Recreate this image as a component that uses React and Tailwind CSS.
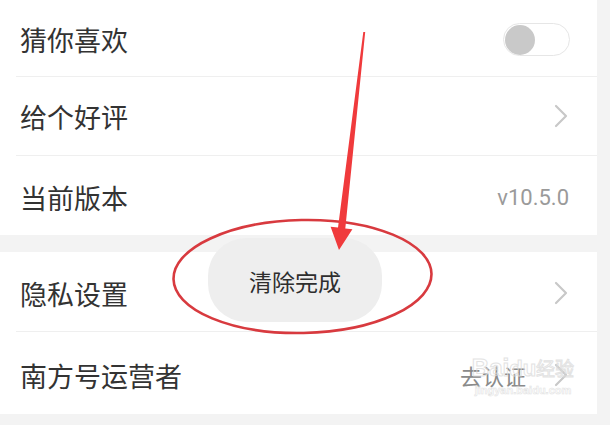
import React from "react";

const FONT = { fontFamily: '"Noto Sans CJK SC", "Noto Sans", sans-serif' };

function Chevron() {
  return (
    <svg width="14" height="24" viewBox="0 0 14 24" className="block">
      <path d="M2 2 L12 12 L2 22" fill="none" stroke="#c8c8c8" strokeWidth="2.2" strokeLinecap="round" strokeLinejoin="round" />
    </svg>
  );
}

function Row({ label, right, h, border = true }) {
  return (
    <div className="pl-[16px]">
      <div
        className={`flex items-center justify-between pl-[4px] pr-[28px] ${h} ${border ? "border-b border-[#efefef]" : ""}`}
      >
        <span className="text-[27px] leading-none text-[#333333]">{label}</span>
        {right}
      </div>
    </div>
  );
}

export default function App() {
  return (
    <div className="relative w-[610px] h-[425px] overflow-hidden bg-[#f3f3f3] flex" style={FONT}>
      <div className="w-[597px] flex flex-col">
        <div className="bg-white">
          <Row
            label="猜你喜欢"
            h="h-[77px] pt-[3px]"
            right={
              <div className="w-[67px] h-[33px] rounded-full border border-[#e6e6e6] bg-white flex items-center pl-[1px] -mr-[1px]">
                <div className="w-[30px] h-[30px] rounded-full bg-[#c9c9c9]" />
              </div>
            }
          />
          <Row label="给个好评" h="h-[79px]" right={<div className="mr-[1px]"><Chevron /></div>} />
          <Row
            label="当前版本"
            h="h-[79px] pt-[4px]"
            border={false}
            right={<span className="text-[22px] leading-none text-[#9a9a9a]" style={{ fontFamily: 'Roboto, "Noto Sans", sans-serif' }}>v10.5.0</span>}
          />
        </div>
        <div className="h-[17px]" />
        <div className="bg-white">
          <Row label="隐私设置" h="h-[80px] pt-[3px]" right={<div className="mr-[1px]"><Chevron /></div>} />
          <Row
            label="南方号运营者"
            h="h-[82px] pt-[4px]"
            border={false}
            right={
              <div className="flex items-center gap-[28px] mr-[1px]">
                <span className="text-[22px] leading-none text-[#8a8a8a]">去认证</span>
                <Chevron />
              </div>
            }
          />
        </div>
      </div>

      {/* watermark */}
      <div className="absolute left-[467px] top-[356px] w-[112px] flex flex-col items-center pointer-events-none opacity-80">
        <span
          className="text-[24px] leading-none font-bold text-transparent"
          style={{ fontFamily: '"Liberation Sans", "Noto Sans CJK SC", sans-serif', WebkitTextStroke: "1px #dcdcdc" }}
        >
          Bai<span className="text-[22px]">du</span><span className="text-[19px] font-normal">经验</span>
        </span>
        <span
          className="mt-[5px] text-[11px] leading-none font-bold text-transparent"
          style={{ fontFamily: '"Liberation Sans", sans-serif', WebkitTextStroke: "0.6px #dddddd" }}
        >
          jingyan.baidu.com
        </span>
      </div>

      {/* toast */}
      <div className="absolute left-[208px] top-[238px] w-[174px] h-[84px] rounded-[38px] bg-[#eeeeee] flex items-center justify-center">
        <span className="text-[23px] leading-none text-[#2e2e2e] mt-[2px]">清除完成</span>
      </div>

      {/* annotation */}
      <svg className="absolute left-0 top-0 pointer-events-none" width="610" height="425" viewBox="0 0 610 425">
        <ellipse cx="302.5" cy="276.5" rx="129" ry="56.5" fill="none" stroke="#d83a3f" strokeWidth="2.6" transform="rotate(-1.2 302.5 276.5)" />
        <polygon
          points="363.3,32 365.2,32 345.3,228.4 352.4,229.3 339,250 330.6,226.7 338,227.6"
          fill="#f03a3c"
        />
      </svg>
    </div>
  );
}
